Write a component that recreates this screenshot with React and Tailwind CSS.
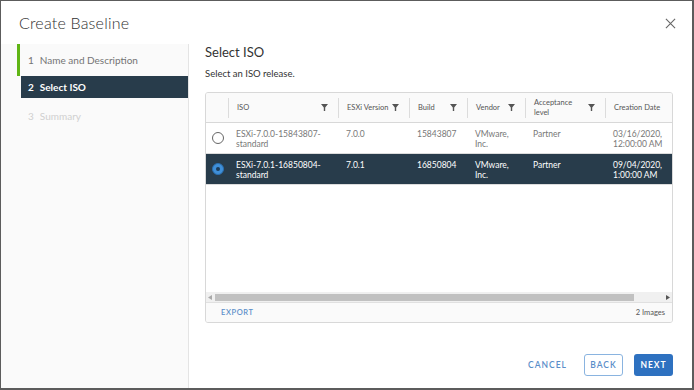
import React from 'react';

const FONT = { fontFamily: 'Lato, "Open Sans", sans-serif' };

function Filter() {
  return (
    <svg width="7" height="7" viewBox="0 0 10 10" className="shrink-0">
      <path d="M0 0h10L6 5v5H4V5z" fill="#555" />
    </svg>
  );
}

function Radio({ checked }) {
  return checked ? (
    <span className="w-[12px] h-[12px] rounded-full bg-[#3f8fd8] border border-[#2a6fb0] flex items-center justify-center">
      <span className="w-[4px] h-[4px] rounded-full bg-[#1c3c5a]" />
    </span>
  ) : (
    <span className="w-[12px] h-[12px] rounded-full border border-[#666] bg-white" />
  );
}

const cols = [
  { label: 'ISO', w: 'w-[110px]', filter: true },
  { label: 'ESXi Version', w: 'w-[71px]', filter: true },
  { label: 'Build', w: 'w-[58px]', filter: true },
  { label: 'Vendor', w: 'w-[58px]', filter: true },
  { label: 'Acceptance level', w: 'w-[80px]', filter: true, narrow: true },
  { label: 'Creation Date', w: 'flex-1', filter: false },
];

const rows = [
  { iso: 'ESXi-7.0.0-15843807-standard', ver: '7.0.0', build: '15843807', vendor: 'VMware, Inc.', level: 'Partner', date: '03/16/2020, 12:00:00 AM', sel: false },
  { iso: 'ESXi-7.0.1-16850804-standard', ver: '7.0.1', build: '16850804', vendor: 'VMware, Inc.', level: 'Partner', date: '09/04/2020, 1:00:00 AM', sel: true },
];

export default function App() {
  return (
    <div style={FONT} className="w-[694px] h-[390px] bg-[#5c5c5c] p-[1px] pr-[2px] pb-[2px]">
      <div className="w-full h-full bg-white flex flex-col">
        <div className="h-[43px] flex items-center justify-between pl-[18px] pr-[16px] shrink-0">
          <h1 className="text-[16px] text-[#313131] font-light tracking-[0.2px]">Create Baseline</h1>
          <svg width="11" height="11" viewBox="0 0 12 12" className="mt-[2px]">
            <path d="M1 1l10 10M11 1L1 11" stroke="#666" strokeWidth="1.2" />
          </svg>
        </div>
        <div className="flex flex-1 min-h-0">
          <div className="w-[188px] bg-[#fafafa] border-r border-[#e4e4e4] shrink-0 pt-0 pl-[16px]">
            <div className="h-[32px] flex items-center border-l-[3px] border-[#60b515] pl-[8px] text-[10px] text-[#747474]">
              <span className="mr-[6px]">1</span>Name and Description
            </div>
            <div className="h-[22px] ml-[4px] flex items-center bg-[#283c4b] pl-[7px] text-[10px] text-white font-bold">
              <span className="mr-[6px]">2</span>Select ISO
            </div>
            <div className="h-[36px] flex items-center pl-[11px] text-[10px] text-[#d0d0d0]">
              <span className="mr-[6px]">3</span>Summary
            </div>
          </div>
          <div className="flex-1 flex flex-col pl-[16px] pr-[19px] min-w-0">
            <h2 className="text-[13px] text-[#333] mt-[0px] leading-[16px]">Select ISO</h2>
            <p className="text-[9.5px] text-[#333] mt-[7px]">Select an ISO release.</p>
            <div className="mt-[11px] h-[231px] border border-[#d8d8d8] rounded-[3px] flex flex-col overflow-hidden">
              <div className="h-[30px] bg-[#fafafa] border-b border-[#d8d8d8] flex items-center shrink-0">
                <div className="w-[22px] h-full" />
                {cols.map((c) => (
                  <div key={c.label} className={`${c.w} h-[20px] border-l border-[#dcdcdc] flex items-center justify-between pl-[8px] pr-[10px]`}>
                    <span className={`text-[7.5px] text-[#555] leading-[10px] ${c.narrow ? 'max-w-[46px]' : 'whitespace-nowrap'}`}>{c.label}</span>
                    {c.filter && <Filter />}
                  </div>
                ))}
              </div>
              {rows.map((r) => (
                <div
                  key={r.iso}
                  className={`h-[31px] flex items-start border-b border-[#dcdcdc] text-[8.5px] leading-[10px] ${r.sel ? 'bg-[#283c4b] text-white' : 'bg-white text-[#777]'}`}
                >
                  <div className="w-[22px] h-full flex items-center justify-center pl-[2px]">
                    <Radio checked={r.sel} />
                  </div>
                  <div className="w-[110px] pl-[8px] pt-[6px] pr-[4px]">{r.iso}</div>
                  <div className="w-[71px] pl-[8px] pt-[6px]">{r.ver}</div>
                  <div className="w-[58px] pl-[8px] pt-[6px]">{r.build}</div>
                  <div className="w-[58px] pl-[8px] pt-[6px] pr-[10px]">{r.vendor}</div>
                  <div className="w-[80px] pl-[8px] pt-[6px]">{r.level}</div>
                  <div className="flex-1 pl-[8px] pt-[6px] pr-[2px]">{r.date}</div>
                </div>
              ))}
              <div className="flex-1" />
              <div className="h-[10px] bg-[#f0f0f0] flex items-center shrink-0 px-[2px] gap-[3px]">
                <svg width="4" height="5" viewBox="0 0 4 5"><path d="M4 0v5L0 2.5z" fill="#aaa" /></svg>
                <div className="flex-1 h-[7px] bg-[#c1c1c1]" />
                <div className="w-[26px]" />
                <svg width="4" height="5" viewBox="0 0 4 5"><path d="M0 0v5l4-2.5z" fill="#555" /></svg>
              </div>
              <div className="h-[20px] bg-[#fafafa] border-t border-[#e0e0e0] flex items-center justify-between pl-[15px] pr-[7px] shrink-0">
                <span className="text-[7.5px] text-[#5a8ec9] tracking-[0.6px] font-semibold">EXPORT</span>
                <span className="text-[7.5px] text-[#555]">2 Images</span>
              </div>
            </div>
            <div className="flex-1" />
            <div className="flex items-center justify-end gap-[11px] mb-[12px]">
              <span className="text-[8.5px] text-[#5a8ec9] font-semibold tracking-[1px] mr-[6px]">CANCEL</span>
              <button className="w-[39px] h-[22px] border border-[#8ab4e0] rounded-[3px] text-[8.5px] text-[#5a8ec9] font-semibold tracking-[1px]">BACK</button>
              <button className="w-[39px] h-[22px] bg-[#2e71c0] rounded-[3px] text-[8.5px] text-white font-bold tracking-[1px]">NEXT</button>
            </div>
          </div>
        </div>
      </div>
    </div>
  );
}
